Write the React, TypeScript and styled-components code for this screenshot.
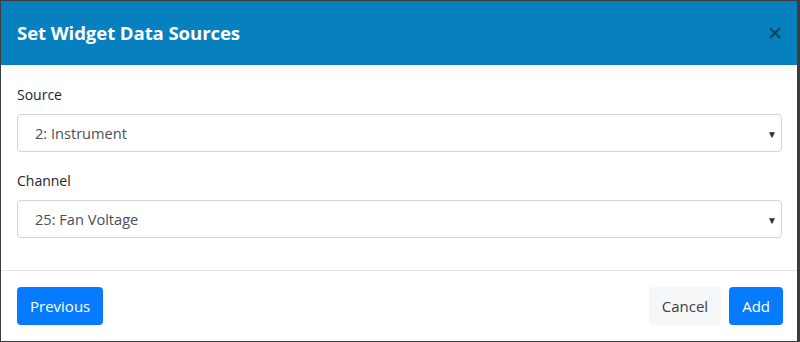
import React from "react";
import styled, { createGlobalStyle } from "styled-components";

const Global = createGlobalStyle`
  html, body { margin: 0; padding: 0; background: #3c3c3c; }
  body { font-family: "Open Sans", "Noto Sans", Arial, sans-serif; }
  * { box-sizing: border-box; }
`;

const Frame = styled.div`
  width: 800px;
  height: 342px;
  padding: 1px 3px 1px 1px;
  display: flex;
`;

const Modal = styled.div`
  flex: 1;
  background: #fff;
  display: flex;
  flex-direction: column;
`;

const Header = styled.div`
  height: 64px;
  background: #0780bf;
  display: flex;
  align-items: center;
  justify-content: space-between;
  padding: 0 15px 2px 16px;
`;

const Title = styled.h5`
  margin: 0;
  color: #fff;
  font-size: 18.6px;
  font-weight: 700;
  letter-spacing: -0.1px;
`;

const Close = styled.button`
  border: 0;
  background: transparent;
  padding: 0;
  margin: 2px 0 0 0;
  width: 14px;
  height: 14px;
  display: flex;
  align-items: center;
  justify-content: center;
  color: #173f5a;
  cursor: pointer;
`;

const Body = styled.div`
  padding: 20px 15px 0 16px;
  display: flex;
  flex-direction: column;
  gap: 19px;
  height: 205px;
`;

const Group = styled.div`
  display: flex;
  flex-direction: column;
`;

const Label = styled.label`
  font-size: 14px;
  color: #212529;
  margin-bottom: 10px;
  line-height: 19px;
`;

const Select = styled.div`
  height: 38px;
  border: 1px solid #ced4da;
  border-radius: 4px;
  display: flex;
  align-items: center;
  justify-content: space-between;
  padding: 0 4px 0 17px;
  font-size: 14.6px;
  color: #495057;
`;

const Caret = styled.span`
  font-size: 10px;
  color: #333;
  margin-top: 2px;
`;

const Footer = styled.div`
  border-top: 1px solid #e2e4e6;
  flex: 1;
  display: flex;
  align-items: flex-start;
  justify-content: space-between;
  padding: 16px 14px 0 16px;
`;

const Right = styled.div`
  display: flex;
  gap: 8px;
`;

const Button = styled.button<{ $variant?: "primary" | "light" }>`
  height: 38px;
  border: 0;
  border-radius: 4px;
  padding: 0 13px;
  font-family: inherit;
  font-size: 15px;
  background: ${(p) => (p.$variant === "light" ? "#f6f7f9" : "#077bff")};
  color: ${(p) => (p.$variant === "light" ? "#3a3f44" : "#fff")};
`;

export default function App() {
  return (
    <>
      <Global />
      <Frame>
        <Modal>
          <Header>
            <Title>Set Widget Data Sources</Title>
            <Close aria-label="Close">
              <svg width="12" height="12" viewBox="0 0 12 12">
                <path d="M1 1L11 11M11 1L1 11" stroke="currentColor" strokeWidth="1.8" />
              </svg>
            </Close>
          </Header>
          <Body>
            <Group>
              <Label>Source</Label>
              <Select>
                <span>2: Instrument</span>
                <Caret>▼</Caret>
              </Select>
            </Group>
            <Group>
              <Label>Channel</Label>
              <Select>
                <span>25: Fan Voltage</span>
                <Caret>▼</Caret>
              </Select>
            </Group>
          </Body>
          <Footer>
            <Button>Previous</Button>
            <Right>
              <Button $variant="light">Cancel</Button>
              <Button>Add</Button>
            </Right>
          </Footer>
        </Modal>
      </Frame>
    </>
  );
}
